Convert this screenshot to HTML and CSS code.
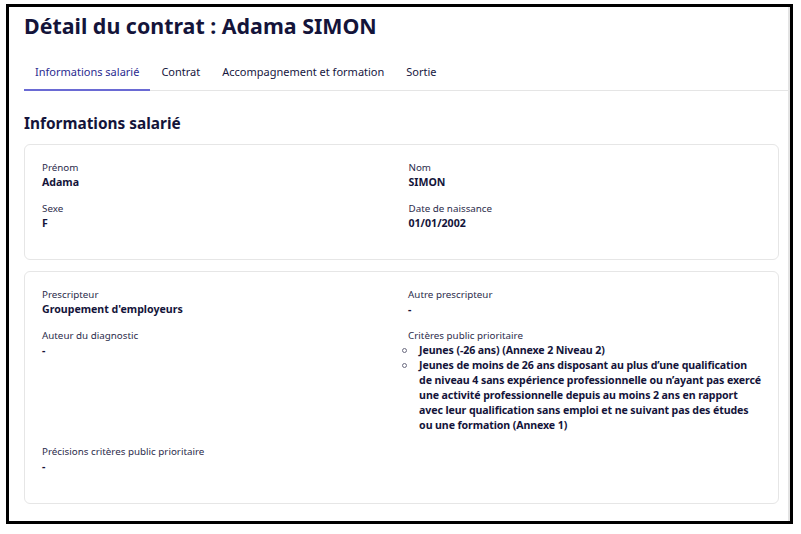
FILE: index.html
```html
<!DOCTYPE html>
<html lang="fr">
<head>
    <meta charset="UTF-8">
    <title>Détail du contrat</title>
    <link rel="stylesheet" href="styles.css">
</head>
<body>
    <div class="frame">
        <h1 class="title">Détail du contrat : Adama SIMON</h1>
        <nav class="tabs">
            <a class="tab active">Informations salarié</a>
            <a class="tab">Contrat</a>
            <a class="tab">Accompagnement et formation</a>
            <a class="tab">Sortie</a>
        </nav>
        <h2 class="section-title">Informations salarié</h2>

        <div class="card">
            <div class="field">
                <div class="label">Prénom</div>
                <div class="value">Adama</div>
            </div>
            <div class="field">
                <div class="label">Nom</div>
                <div class="value">SIMON</div>
            </div>
            <div class="field">
                <div class="label">Sexe</div>
                <div class="value">F</div>
            </div>
            <div class="field">
                <div class="label">Date de naissance</div>
                <div class="value">01/01/2002</div>
            </div>
        </div>

        <div class="card card-last">
            <div class="field">
                <div class="label">Prescripteur</div>
                <div class="value">Groupement d'employeurs</div>
            </div>
            <div class="field">
                <div class="label">Autre prescripteur</div>
                <div class="value">-</div>
            </div>
            <div class="field">
                <div class="label">Auteur du diagnostic</div>
                <div class="value">-</div>
            </div>
            <div class="field">
                <div class="label">Critères public prioritaire</div>
                <ul class="criteria">
                    <li>Jeunes (-26 ans) (Annexe 2 Niveau 2)</li>
                    <li>Jeunes de moins de 26 ans disposant au plus d’une qualification<br>
                        de niveau 4 sans expérience professionnelle ou n’ayant pas exercé<br>
                        une activité professionnelle depuis au moins 2 ans en rapport<br>
                        avec leur qualification sans emploi et ne suivant pas des études<br>
                        ou une formation (Annexe 1)</li>
                </ul>
            </div>
            <div class="field">
                <div class="label">Précisions critères public prioritaire</div>
                <div class="value">-</div>
            </div>
        </div>
    </div>
</body>
</html>
```

FILE: styles.css
```css
body {
    margin: 0;
    padding: 0;
    background: #fff;
    font-family: "Noto Sans", Arial, sans-serif;
    color: #161640;
}

.frame {
    box-sizing: border-box;
    width: 787px;
    height: 520px;
    margin: 4px 0 0 6px;
    border: 3px solid #000;
    padding: 0 11px 0 15px;
    box-shadow: inset -2px 0 0 #e3e3e3;
}

.title {
    margin: 0;
    padding-top: 5px;
    font-size: 21.4px;
    line-height: 28px;
    font-weight: 700;
    color: #14143a;
}

.tabs {
    display: flex;
    margin: 24px -11px 0 0;
    border-bottom: 1px solid #e5e5e5;
}

.tab {
    padding: 0 11px;
    font-size: 11px;
    line-height: 15px;
    height: 25px;
    color: #161640;
    border-bottom: 2px solid transparent;
    margin-bottom: -1px;
}

.tab.active {
    color: #2b2b8f;
    border-bottom-color: #6a6ad4;
}

.section-title {
    margin: 22px 0 0 0;
    font-size: 15.4px;
    line-height: 22px;
    font-weight: 700;
    color: #14143a;
}

.card {
    display: grid;
    grid-template-columns: 1fr 1fr;
    column-gap: 14px;
    row-gap: 11px;
    margin-top: 9px;
    padding: 15px 17px 28px 17px;
    border: 1px solid #e6e6e6;
    border-radius: 6px;
}

.card-last {
    margin-top: 11px;
    padding-bottom: 29px;
}

.label {
    font-size: 9.8px;
    line-height: 15px;
    color: #2c2c4c;
}

.value {
    font-size: 10.6px;
    line-height: 15px;
    font-weight: 700;
    color: #14143a;
}

.criteria {
    list-style: none;
    margin: 0;
    padding: 0 0 0 11px;
}

.criteria li {
    position: relative;
    font-size: 10.6px;
    letter-spacing: -0.1px;
    line-height: 15px;
    font-weight: 700;
    color: #14143a;
    white-space: nowrap;
}

.criteria li::before {
    content: "";
    position: absolute;
    left: -17px;
    top: 5px;
    width: 3px;
    height: 3px;
    border: 1px solid #6b6b80;
    border-radius: 50%;
}
```
